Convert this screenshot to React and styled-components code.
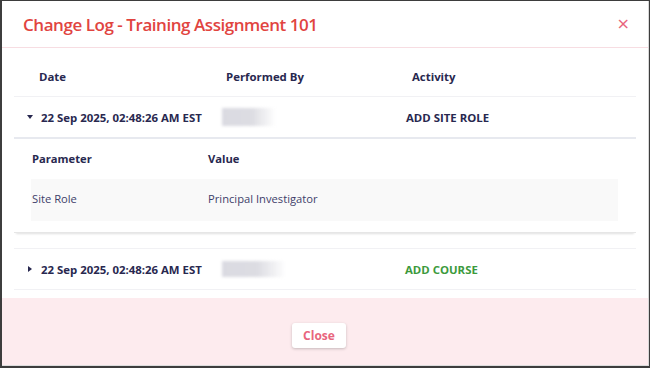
import React from 'react';
import styled, { createGlobalStyle } from 'styled-components';

const Navy = '#28284f';
const Red = '#e1443f';
const Pink = '#e8657d';

const GlobalStyle = createGlobalStyle`
  html, body { margin: 0; padding: 0; }
  body {
    background: #3d3d3d;
    font-family: "Open Sans", "Noto Sans", Arial, sans-serif;
  }
`;

const Frame = styled.div`
  width: 650px;
  height: 368px;
  box-sizing: border-box;
  padding: 1px 1px 2px 2px;
  background: #3d3d3d;
`;

const Modal = styled.div`
  height: 100%;
  background: #fff;
  display: flex;
  flex-direction: column;
  border-right: 1px solid #d8d8d8;
  box-sizing: border-box;
`;

const Header = styled.header`
  height: 46px;
  display: flex;
  align-items: center;
  justify-content: space-between;
  padding: 0 18px 0 21px;
  border-bottom: 1px solid #f7dde2;
`;

const Title = styled.h1`
  margin: 0;
  font-size: 17px;
  font-weight: 600;
  color: ${Red};
  letter-spacing: -0.45px;
`;

const CloseX = styled.button`
  border: 0;
  background: none;
  padding: 0;
  color: ${Pink};
  font-size: 16px;
  line-height: 1;
  font-family: "DejaVu Sans", sans-serif;
  cursor: pointer;
`;

const Body = styled.div`
  flex: 1;
  padding: 8px 12px 5px 12px;
`;

const Row = styled.div`
  display: grid;
  grid-template-columns: 187px 186px 1fr;
  align-items: center;
  height: ${p => p.$h || 40}px;
  border-bottom: ${p => p.$strong ? '2px solid #e7e9ef' : '1px solid #f1f1f4'};
  border-top: ${p => p.$topLine ? '1px solid #f1f1f4' : '0'};
  font-size: 11.4px;
  font-weight: 700;
  color: ${Navy};
`;

const Cell = styled.div`
  padding-left: ${p => p.$pl || 0}px;
  display: flex;
  align-items: center;
  white-space: nowrap;
  color: ${p => p.$color || 'inherit'};
`;

const Caret = styled.span`
  width: 0;
  height: 0;
  margin-right: 8px;
  ${p => p.$open
    ? `border-left: 3px solid transparent; border-right: 3px solid transparent; border-top: 4px solid ${Navy}; margin-left: 0;`
    : `border-top: 3.5px solid transparent; border-bottom: 3.5px solid transparent; border-left: 4px solid ${Navy}; margin-left: 1px; margin-right: 9px;`}
`;

const Blur = styled.span`
  display: block;
  width: ${p => p.$w}px;
  height: ${p => p.$hh || 18}px;
  background: linear-gradient(to right, #dadae1 0%, #dcdce2 55%, rgba(255,255,255,0) 100%);
  filter: blur(1.5px);
`;

const Expanded = styled.div`
  padding: 0 18px 11px 17px;
  border-bottom: 1px solid #e6e6e6;
  box-shadow: 0 3px 2px -2px rgba(0, 0, 0, 0.12);
  margin-bottom: 15px;
`;

const SubRow = styled.div`
  display: grid;
  grid-template-columns: 176px 1fr;
  align-items: center;
  height: ${p => p.$h}px;
  box-sizing: border-box;
  padding: 0 0 ${p => p.$pb || 0}px 1px;
  margin-bottom: ${p => p.$mb || 0}px;
  background: ${p => p.$bg || 'transparent'};
  font-size: 11.2px;
  font-weight: ${p => p.$bold ? 700 : 400};
  color: ${p => p.$bold ? Navy : '#3e3e6a'};
`;

const Footer = styled.footer`
  height: 68px;
  background: #fdebee;
  border-bottom: 1px solid #dcdcdc;
  display: flex;
  justify-content: center;
  padding: 25px 12px 0 0;
  box-sizing: border-box;
`;

const CloseButton = styled.button`
  width: 54px;
  height: 25px;
  border: 0;
  border-radius: 3px;
  background: #fff;
  box-shadow: 0 1px 3px rgba(0, 0, 0, 0.22);
  color: ${Pink};
  font-family: "Open Sans", sans-serif;
  font-size: 12px;
  font-weight: 700;
  cursor: pointer;
`;

export default function App() {
  return (
    <Frame>
      <GlobalStyle />
      <Modal>
        <Header>
          <Title>Change Log - Training Assignment 101</Title>
          <CloseX>×</CloseX>
        </Header>
        <Body>
          <Row>
            <Cell $pl={25}>Date</Cell>
            <Cell $pl={25}>Performed By</Cell>
            <Cell $pl={25}>Activity</Cell>
          </Row>
          <Row $h={40} $strong>
            <Cell $pl={13}><Caret $open />22 Sep 2025, 02:48:26 AM EST</Cell>
            <Cell $pl={21}><Blur $w={54} /></Cell>
            <Cell $pl={19}>ADD SITE ROLE</Cell>
          </Row>
          <Expanded>
            <SubRow $h={39} $mb={1} $bold>
              <span>Parameter</span>
              <span>Value</span>
            </SubRow>
            <SubRow $h={42} $pb={3} $bg="#f9f9f9">
              <span>Site Role</span>
              <span>Principal Investigator</span>
            </SubRow>
          </Expanded>
          <Row $h={40} $topLine>
            <Cell $pl={13}><Caret />22 Sep 2025, 02:48:26 AM EST</Cell>
            <Cell $pl={21}><Blur $w={64} $hh={16} /></Cell>
            <Cell $pl={18} $color="#3c9a3c">ADD COURSE</Cell>
          </Row>
        </Body>
        <Footer>
          <CloseButton>Close</CloseButton>
        </Footer>
      </Modal>
    </Frame>
  );
}
